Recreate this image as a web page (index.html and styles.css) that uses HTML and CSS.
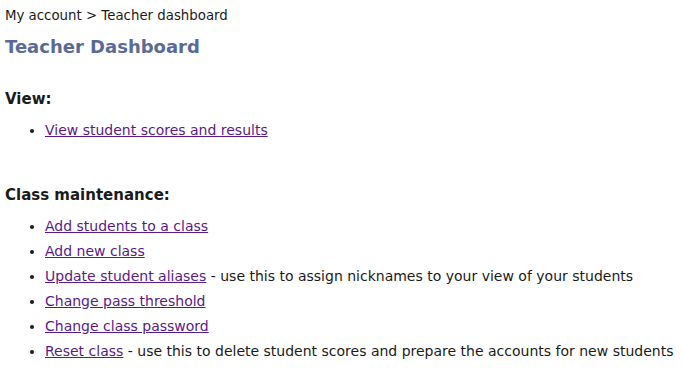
FILE: index.html
```html
<!DOCTYPE html>
<html>
<head>
<meta charset="utf-8">
<link rel="stylesheet" href="styles.css">
</head>
<body>
<div class="crumbs">My account &gt; Teacher dashboard</div>
<h1 class="title">Teacher Dashboard</h1>
<h2 class="section">View:</h2>
<ul class="links links-first">
  <li><a href="#">View student scores and results</a></li>
</ul>
<h2 class="section section-gap">Class maintenance:</h2>
<ul class="links links-second">
  <li><a href="#">Add students to a class</a></li>
  <li><a href="#">Add new class</a></li>
  <li><a href="#">Update student aliases</a> - use this to assign nicknames to your view of your students</li>
  <li><a href="#">Change pass threshold</a></li>
  <li><a href="#">Change class password</a></li>
  <li><a href="#">Reset class</a> - use this to delete student scores and prepare the accounts for new students</li>
</ul>
</body>
</html>
```
FILE: styles.css
```css
body {
  margin: 0;
  padding: 7px 5px;
  font-family: "DejaVu Sans", Verdana, sans-serif;
  color: #1a1a1a;
  background: #fff;
}
.crumbs {
  font-size: 13.33px;
  line-height: 18px;
}
.title {
  font-size: 18px;
  font-weight: bold;
  color: #5a6a98;
  margin: 11px 0 0;
  line-height: 22px;
}
.section {
  font-size: 15px;
  font-weight: bold;
  margin: 31px 0 0;
  line-height: 20px;
}
.section-gap {
  margin-top: 42px;
}
.links {
  margin: 9px 0 0;
  padding-left: 40px;
  font-size: 14px;
  line-height: 25px;
}
.links-second {
  margin-top: 9px;
}
.links a {
  color: #5a1a88;
}
```
